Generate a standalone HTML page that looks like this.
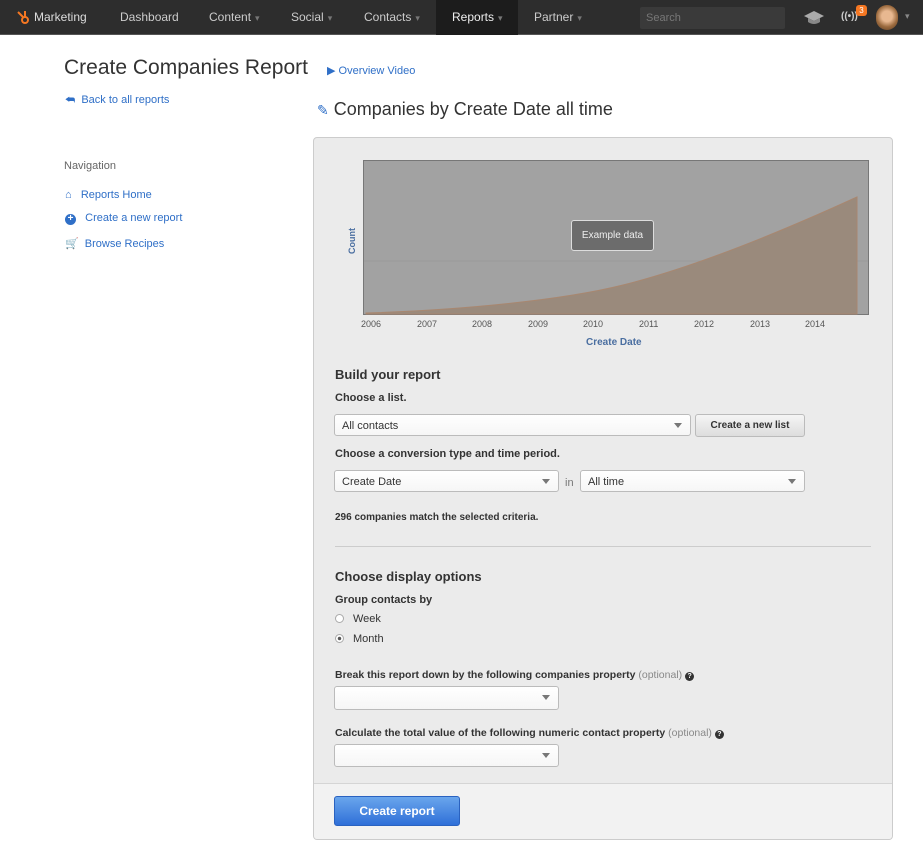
<!DOCTYPE html>
<html><head><style>
*{margin:0;padding:0;box-sizing:border-box}
body{width:923px;height:844px;background:#fff;font-family:"Liberation Sans",sans-serif;position:relative;overflow:hidden;color:#333}
.a{position:absolute;white-space:nowrap}
.nav{position:absolute;left:0;top:0;width:923px;height:35px;background:#2d2d2d;border-bottom:1px solid #555}
.nav .a{color:#ccc;font-size:12px;top:10px}
.car{color:#777;font-size:9px;margin-left:4px}
.blue{color:#2f6fc7}
.sel{position:absolute;height:22px;background:linear-gradient(#fff,#f6f6f6);border:1px solid #bbb;border-radius:3px;font-size:11px;padding:5px 7px;color:#333}
.sel:after{content:"";position:absolute;right:8px;top:8px;border:4px solid transparent;border-top:5px solid #777}
.lbl{font-size:11px;font-weight:bold;color:#333}
.q{display:inline-block;width:9px;height:9px;border-radius:50%;background:#333;color:#fff;font-size:7px;line-height:9px;text-align:center;vertical-align:0}
.yr{position:absolute;top:319px;font-size:9px;color:#555}
</style></head><body>
<div class="nav">
<svg class="a" style="left:15px;top:9px" width="16" height="16" viewBox="0 0 16 16"><g stroke="#f57722" stroke-width="2" fill="none"><circle cx="10" cy="11" r="3"/><path d="M8 8 3 3M10 8V2"/></g></svg>
<div class="a" style="left:34px;color:#ddd">Marketing</div>
<div class="a" style="left:120px">Dashboard</div>
<div class="a" style="left:209px">Content<span class="car">▾</span></div>
<div class="a" style="left:291px">Social<span class="car">▾</span></div>
<div class="a" style="left:364px">Contacts<span class="car">▾</span></div>
<div style="position:absolute;left:436px;top:0;width:82px;height:35px;background:#1c1c1c"></div>
<div class="a" style="left:452px;color:#eee">Reports<span class="car">▾</span></div>
<div class="a" style="left:534px">Partner<span class="car">▾</span></div>
<div style="position:absolute;left:640px;top:7px;width:145px;height:22px;background:#3a3a3a;border-radius:2px"></div>
<div class="a" style="left:646px;top:12px;font-size:11px;color:#777">Search</div>
<svg class="a" style="left:803px;top:10px" width="22" height="16" viewBox="0 0 22 16"><path d="M1 6 11 1 21 6 11 11Z" fill="#aaa"/><path d="M5 8v4q6 4 12 0V8l-6 3Z" fill="#888"/></svg>
<div class="a" style="left:841px;top:11px;font-size:10px;color:#ccc;font-weight:bold">((•))</div>
<div class="a" style="left:856px;top:5px;width:11px;height:11px;border-radius:3px;background:#f57722;color:#fff;font-size:8px;text-align:center;line-height:11px">3</div>
<div class="a" style="left:876px;top:5px;width:22px;height:25px;border-radius:11px;background:radial-gradient(circle at 50% 45%,#e8b890 30%,#9b6a3e 60%,#5a3a20)"></div>
<div class="a" style="left:905px;top:11px;font-size:9px;color:#888">▾</div>
</div>

<div class="a" style="left:64px;top:56px;font-size:21px;color:#333">Create Companies Report</div>
<div class="a blue" style="left:327px;top:64px;font-size:11px">▶ Overview Video</div>
<div class="a blue" style="left:65px;top:94px;font-size:11px">⮪&nbsp; Back to all reports</div>
<div class="a" style="left:317px;top:99px;font-size:18px;color:#333"><span class="blue" style="font-size:14px">✎</span> Companies by Create Date all time</div>
<div class="a" style="left:64px;top:160px;font-size:11px;color:#666">Navigation</div>
<div class="a blue" style="left:65px;top:189px;font-size:11px">⌂&nbsp;&nbsp; Reports Home</div>
<div class="a blue" style="left:65px;top:212px;font-size:11px"><span style="display:inline-block;width:11px;height:11px;border-radius:50%;background:#2f6fc7;color:#fff;font-size:10px;line-height:10px;text-align:center;font-weight:bold">+</span>&nbsp;&nbsp; Create a new report</div>
<div class="a blue" style="left:65px;top:237px;font-size:11px">🛒&nbsp; Browse Recipes</div>

<div style="position:absolute;left:313px;top:137px;width:580px;height:703px;background:#ebebeb;border:1px solid #ccc;border-radius:4px;overflow:hidden">
<div style="position:absolute;left:0;top:645px;width:580px;height:58px;background:#f2f2f2;border-top:1px solid #d5d5d5"></div>
</div>
<svg class="a" style="left:363px;top:160px" width="506" height="155"><rect x="0.5" y="0.5" width="505" height="154" fill="#a2a2a2" stroke="#777"/><line x1="1" y1="101" x2="505" y2="101" stroke="#999"/><path d="M3 153 C100 150 200 140 260 125 S400 80 494 37 V154 H3Z" fill="#9a8a7c" stroke="#a88770"/></svg>
<div class="a" style="left:571px;top:220px;width:83px;height:31px;background:#6c6c6c;border:1px solid #ddd;border-radius:3px;color:#eee;font-size:10px;text-align:center;line-height:29px">Example data</div>
<div class="a" style="left:339px;top:236px;transform:rotate(-90deg);font-size:9px;font-weight:bold;color:#4a6ea0">Count</div>
<div class="yr" style="left:361px">2006</div><div class="yr" style="left:417px">2007</div><div class="yr" style="left:472px">2008</div><div class="yr" style="left:528px">2009</div><div class="yr" style="left:583px">2010</div><div class="yr" style="left:639px">2011</div><div class="yr" style="left:694px">2012</div><div class="yr" style="left:750px">2013</div><div class="yr" style="left:805px">2014</div>
<div class="a" style="left:586px;top:337px;font-size:10px;font-weight:bold;color:#4a6ea0">Create Date</div>

<div class="a" style="left:335px;top:367px;font-size:13px;font-weight:bold">Build your report</div>
<div class="a lbl" style="left:335px;top:392px">Choose a list.</div>
<div class="sel" style="left:334px;top:414px;width:357px">All contacts</div>
<div class="a" style="left:695px;top:414px;width:110px;height:23px;border:1px solid #bbb;border-radius:3px;background:linear-gradient(#f5f5f5,#ddd);font-size:10px;font-weight:bold;text-align:center;line-height:21px">Create a new list</div>
<div class="a lbl" style="left:335px;top:448px">Choose a conversion type and time period.</div>
<div class="sel" style="left:334px;top:470px;width:225px">Create Date</div>
<div class="a" style="left:565px;top:477px;font-size:11px;color:#777">in</div>
<div class="sel" style="left:580px;top:470px;width:225px">All time</div>
<div class="a lbl" style="left:335px;top:512px;font-size:10px">296 companies match the selected criteria.</div>
<div style="position:absolute;left:335px;top:546px;width:536px;height:1px;background:#ccc"></div>
<div class="a" style="left:335px;top:569px;font-size:13px;font-weight:bold">Choose display options</div>
<div class="a lbl" style="left:335px;top:594px">Group contacts by</div>
<div class="a" style="left:335px;top:614px;width:9px;height:9px;border:1px solid #aaa;border-radius:50%;background:#fff"></div>
<div class="a" style="left:353px;top:613px;font-size:11px">Week</div>
<div class="a" style="left:335px;top:634px;width:9px;height:9px;border:1px solid #aaa;border-radius:50%;background:radial-gradient(#555 30%,#fff 40%)"></div>
<div class="a" style="left:353px;top:633px;font-size:11px">Month</div>
<div class="a lbl" style="left:335px;top:669px;font-size:10.5px">Break this report down by the following companies property <span style="font-weight:normal;color:#888">(optional)</span> <span class="q">?</span></div>
<div class="sel" style="left:334px;top:686px;width:225px;height:24px"></div>
<div class="a lbl" style="left:335px;top:727px;font-size:10.5px">Calculate the total value of the following numeric contact property <span style="font-weight:normal;color:#888">(optional)</span> <span class="q">?</span></div>
<div class="sel" style="left:334px;top:744px;width:225px;height:23px"></div>
<div class="a" style="left:334px;top:796px;width:126px;height:30px;border-radius:3px;background:linear-gradient(#6aa6ec,#2f6fd8);border:1px solid #2a62c0;color:#fff;font-size:12px;font-weight:bold;text-align:center;line-height:28px">Create report</div>
</body></html>
